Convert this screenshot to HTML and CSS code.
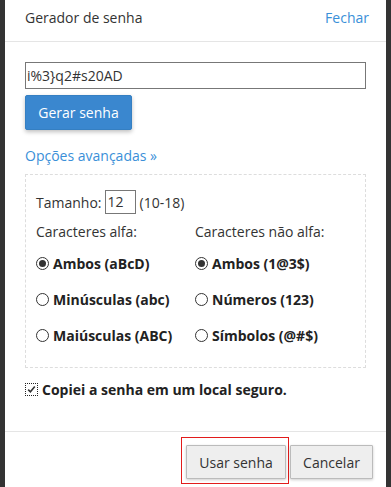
FILE: index.html
```html
<!DOCTYPE html>
<html>
<head>
<meta charset="utf-8">
<link rel="stylesheet" href="styles.css">
</head>
<body>
<div class="backdrop">
  <div class="dialog">
    <div class="header">
      <span class="title">Gerador de senha</span>
      <a class="link close">Fechar</a>
    </div>
    <div class="content">
      <div class="pwd">i%3}q2#s20AD</div>
      <button class="btn-primary">Gerar senha</button>
      <a class="link adv">Opções avançadas »</a>
      <div class="options">
        <div class="size-row">
          <span>Tamanho:</span>
          <span class="size-input">12</span>
          <span>(10-18)</span>
        </div>
        <div class="cols">
          <div class="col">
            <div class="col-head">Caracteres alfa:</div>
            <div class="radio-row"><span class="radio checked"></span><b>Ambos (aBcD)</b></div>
            <div class="radio-row"><span class="radio"></span><b>Minúsculas (abc)</b></div>
            <div class="radio-row"><span class="radio"></span><b>Maiúsculas (ABC)</b></div>
          </div>
          <div class="col">
            <div class="col-head">Caracteres não alfa:</div>
            <div class="radio-row"><span class="radio checked"></span><b>Ambos (1@3$)</b></div>
            <div class="radio-row"><span class="radio"></span><b>Números (123)</b></div>
            <div class="radio-row"><span class="radio"></span><b>Símbolos (@#$)</b></div>
          </div>
        </div>
      </div>
      <div class="check-row">
        <span class="checkbox"><svg width="11" height="11" viewBox="0 0 11 11"><path d="M2.2 5.6 L4.4 7.8 L8.8 2.6" fill="none" stroke="#333" stroke-width="1.6"/></svg></span>
        <b>Copiei a senha em um local seguro.</b>
      </div>
    </div>
    <div class="footer">
      <span class="focus-ring"><button class="btn">Usar senha</button></span>
      <button class="btn">Cancelar</button>
    </div>
  </div>
</div>
</body>
</html>
```
FILE: styles.css
```css
* { box-sizing: border-box; }
html, body { margin: 0; padding: 0; }
body {
  background: #333;
  font-family: "Open Sans", "Liberation Sans", sans-serif;
  font-size: 14px;
  color: #333;
}
.backdrop { padding: 0 5px; height: 487px; }
.dialog {
  background: #fff;
  height: 487px;
  display: flex;
  flex-direction: column;
}
.header {
  height: 42px;
  border-bottom: 1px solid #e5e5e5;
  display: flex;
  justify-content: space-between;
  align-items: center;
  padding: 0 17px 6px 20px;
  font-size: 14px;
}
.link { color: #3a8fd8; }
.close { font-size: 14px; }
.content {
  padding: 20px 20px 0 20px;
  flex: 1;
  display: flex;
  flex-direction: column;
  align-items: flex-start;
}
.pwd {
  width: 341px;
  height: 27px;
  border: 1px solid #777;
  padding: 0 1px;
  line-height: 25px;
  font-size: 14px;
}
.btn-primary {
  margin-top: 6px;
  width: 107px;
  height: 35px;
  background: #3a87cf;
  border: 1px solid #357fc2;
  border-radius: 2px;
  color: #fff;
  font-family: inherit;
  font-size: 14px;
  box-shadow: 0 2px 4px rgba(0,0,0,0.25);
  padding: 0;
}
.adv { margin-top: 16px; line-height: 20px; }
.options {
  margin-top: 8px;
  width: 341px;
  height: 194px;
  border: 1px dashed #ddd;
  padding: 15px 10px 0 10px;
}
.size-row { display: flex; align-items: center; gap: 3px; height: 24px; }
.size-input {
  width: 31px;
  height: 24px;
  border: 1px solid #777;
  line-height: 22px;
  padding-left: 2px;
  margin-right: 1px;
}
.cols { display: flex; margin-top: 8px; }
.col { width: 159px; }
.col-head { line-height: 20px; }
.radio-row {
  display: flex;
  align-items: center;
  height: 36px;
  white-space: nowrap;
}
.col-head + .radio-row { margin-top: 3px; }
.radio-row b { font-size: 14px; font-weight: 700; color: #222; }
.radio {
  width: 13px;
  height: 13px;
  border: 1px solid #333;
  border-radius: 50%;
  margin-right: 4px;
  display: inline-flex;
  align-items: center;
  justify-content: center;
  background: #fff;
  flex: none;
}
.radio.checked::after {
  content: "";
  width: 7px;
  height: 7px;
  border-radius: 50%;
  background: #333;
}
.check-row {
  display: flex;
  align-items: center;
  margin-top: 13px;
  height: 16px;
  white-space: nowrap;
}
.check-row b { font-size: 14px; color: #222; }
.checkbox {
  width: 13px;
  height: 13px;
  border: 1px dotted #222;
  margin-right: 4px;
  display: inline-flex;
  align-items: center;
  justify-content: center;
  background: #fff;
  flex: none;
}
.checkbox svg { display: block; }
.footer {
  height: 56px;
  border-top: 1px solid #e5e5e5;
  display: flex;
  justify-content: flex-end;
  align-items: flex-start;
  padding: 5px 13px 0 0;
  gap: 1px;
}
.focus-ring {
  border: 1px solid #e21b1b;
  padding: 7px 2px 4px 4px;
  display: block;
  height: 47px;
}
.btn {
  height: 34px;
  background: #eee;
  border: 1px solid #bbb;
  color: #333;
  font-family: inherit;
  font-size: 14px;
  padding: 0;
  white-space: nowrap;
  box-shadow: 0 1px 3px rgba(0,0,0,0.2);
  border-radius: 1px;
}
.focus-ring .btn { width: 100px; display: block; }
.footer > .btn { width: 83px; margin-top: 8px; }
```
